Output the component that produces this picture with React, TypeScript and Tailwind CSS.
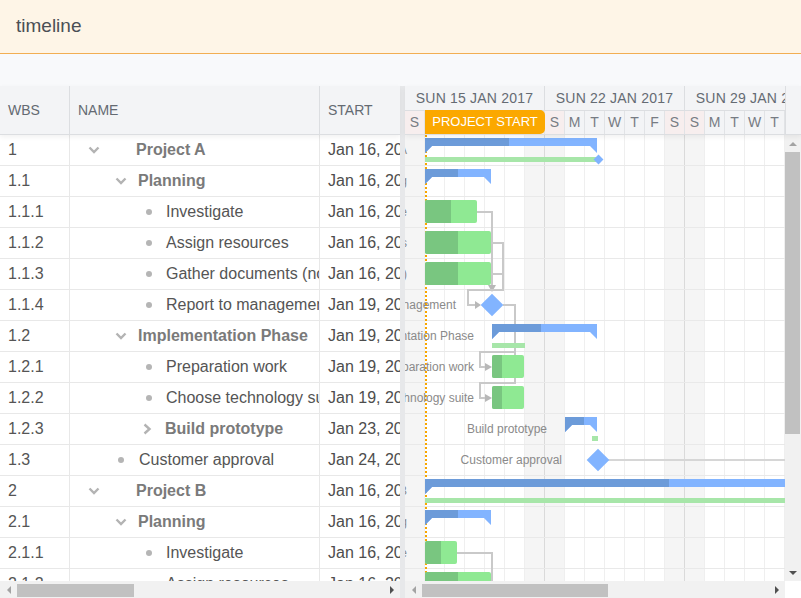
import React from "react";

type Kind = "p0" | "p1" | "p2c" | "l1" | "l2";

type Bar =
  | { t: "parent"; x: number; w: number; p: number; base?: [number, number]; mark?: boolean }
  | { t: "task"; x: number; w: number; p: number }
  | { t: "ms"; x: number; tail?: boolean };

interface Row {
  wbs: string;
  name: string;
  start: string;
  kind: Kind;
  bar: Bar;
}

const rows: Row[] = [
  { wbs: "1", name: "Project A", start: "Jan 16, 2017", kind: "p0", bar: { t: "parent", x: 20, w: 172, p: 84, base: [20, 171], mark: true } },
  { wbs: "1.1", name: "Planning", start: "Jan 16, 2017", kind: "p1", bar: { t: "parent", x: 20, w: 66, p: 33 } },
  { wbs: "1.1.1", name: "Investigate", start: "Jan 16, 2017", kind: "l2", bar: { t: "task", x: 20, w: 52, p: 26 } },
  { wbs: "1.1.2", name: "Assign resources", start: "Jan 16, 2017", kind: "l2", bar: { t: "task", x: 20, w: 66, p: 33 } },
  { wbs: "1.1.3", name: "Gather documents (not resourced)", start: "Jan 16, 2017", kind: "l2", bar: { t: "task", x: 20, w: 66, p: 33 } },
  { wbs: "1.1.4", name: "Report to management", start: "Jan 19, 2017", kind: "l2", bar: { t: "ms", x: 87 } },
  { wbs: "1.2", name: "Implementation Phase", start: "Jan 19, 2017", kind: "p1", bar: { t: "parent", x: 87, w: 105, p: 49, base: [87, 33] } },
  { wbs: "1.2.1", name: "Preparation work", start: "Jan 19, 2017", kind: "l2", bar: { t: "task", x: 87, w: 32, p: 10 } },
  { wbs: "1.2.2", name: "Choose technology suite", start: "Jan 19, 2017", kind: "l2", bar: { t: "task", x: 87, w: 32, p: 10 } },
  { wbs: "1.2.3", name: "Build prototype", start: "Jan 23, 2017", kind: "p2c", bar: { t: "parent", x: 160, w: 32, p: 19, base: [187, 6] } },
  { wbs: "1.3", name: "Customer approval", start: "Jan 24, 2017", kind: "l1", bar: { t: "ms", x: 193, tail: true } },
  { wbs: "2", name: "Project B", start: "Jan 16, 2017", kind: "p0", bar: { t: "parent", x: 20, w: 400, p: 244, base: [20, 400] } },
  { wbs: "2.1", name: "Planning", start: "Jan 16, 2017", kind: "p1", bar: { t: "parent", x: 20, w: 66, p: 33 } },
  { wbs: "2.1.1", name: "Investigate", start: "Jan 16, 2017", kind: "l2", bar: { t: "task", x: 20, w: 32, p: 16 } },
  { wbs: "2.1.2", name: "Assign resources", start: "Jan 16, 2017", kind: "l2", bar: { t: "task", x: 20, w: 66, p: 33 } },
];

// tree indent per row kind (icon offset inside NAME cell, gap before text)
const indent: Record<Kind, { pad: string; gap: string }> = {
  p0: { pad: "pl-[18px]", gap: "ml-[36px]" },
  p1: { pad: "pl-[45px]", gap: "ml-[11px]" },
  p2c: { pad: "pl-[73px]", gap: "ml-[13px]" },
  l1: { pad: "pl-[48px]", gap: "ml-[15px]" },
  l2: { pad: "pl-[76px]", gap: "ml-[14px]" },
};

const days = Array.from({ length: 19 }, (_, k) => k);
const dayLetters = ["S", "M", "T", "W", "T", "F", "S"];
const isWeekend = (k: number) => k % 7 === 0 || k % 7 === 6;

const Tri = ({ dir, dark }: { dir: "l" | "r" | "u" | "d"; dark?: boolean }) => {
  const pts = { l: "5,0 5,8 1,4", r: "1,0 1,8 5,4", u: "0,5 8,5 4,1", d: "0,1 8,1 4,5" }[dir];
  const horiz = dir === "l" || dir === "r";
  return (
    <svg width={horiz ? 6 : 8} height={horiz ? 8 : 6} viewBox={horiz ? "0 0 6 8" : "0 0 8 6"}>
      <polygon points={pts} fill={dark ? "#505050" : "#a3a3a3"} />
    </svg>
  );
};

function TreeIcon({ kind }: { kind: Kind }) {
  if (kind === "p0" || kind === "p1")
    return (
      <svg width="12" height="8" viewBox="0 0 12 8" className="shrink-0">
        <path d="M1.5 1.5 L6 6 L10.5 1.5" fill="none" stroke="#b3b3b3" strokeWidth="2.4" />
      </svg>
    );
  if (kind === "p2c")
    return (
      <svg width="9" height="12" viewBox="0 0 9 12" className="shrink-0">
        <path d="M1.5 1.5 L6.5 6 L1.5 10.5" fill="none" stroke="#b3b3b3" strokeWidth="2.4" />
      </svg>
    );
  return <div className="h-[6px] w-[6px] shrink-0 rounded-full bg-[#b5b5b5]" />;
}

function LeftGrid() {
  return (
    <div className="flex w-[400px] shrink-0 flex-col">
      <div className="relative z-10 flex h-[49px] shrink-0 border-b border-[#dcdee1] bg-[#f3f4f6] text-[14px] text-[#646a72] shadow-[0_2px_5px_rgba(0,0,0,0.06)]">
        <div className="flex w-[70px] items-center border-r border-[#dcdee1] pl-[8px]">WBS</div>
        <div className="flex w-[250px] items-center border-r border-[#dcdee1] pl-[8px]">NAME</div>
        <div className="flex flex-1 items-center pl-[8px]">START</div>
      </div>
      <div className="min-h-0 flex-1 overflow-hidden">
        {rows.map((r, i) => {
          const parent = r.kind.startsWith("p");
          return (
            <div key={i} className="flex h-[31px] shrink-0 border-b border-[#e8e8e8] text-[16px]">
              <div className="flex w-[70px] items-center border-r border-[#e8e8e8] pl-[8px] text-[#555]">{r.wbs}</div>
              <div className={`flex w-[250px] items-center overflow-hidden whitespace-nowrap border-r border-[#e8e8e8] ${indent[r.kind].pad}`}>
                <TreeIcon kind={r.kind} />
                <span className={`${indent[r.kind].gap} ${parent ? "font-bold text-[#7a7a7a]" : "text-[#555]"}`}>{r.name}</span>
              </div>
              <div className="flex flex-1 items-center overflow-hidden whitespace-nowrap pl-[8px] text-[#4d4d4d]">{r.start}</div>
            </div>
          );
        })}
      </div>
      <div className="flex h-[17px] shrink-0 bg-[#f1f1f1]">
        <div className="flex w-[17px] items-center justify-center">
          <Tri dir="l" />
        </div>
        <div className="mt-[3px] mb-px h-[13px] w-[117px] bg-[#c1c1c1]" />
        <div className="flex-1" />
        <div className="flex w-[17px] items-center justify-center">
          <Tri dir="r" dark />
        </div>
      </div>
    </div>
  );
}

function ParentBar({ x, w, p }: { x: number; w: number; p: number }) {
  const h = 8;
  const t = 7;
  const full = `0,0 ${w},0 ${w},${h + t} ${w - t},${h} ${t},${h} 0,${h + t}`;
  const dark = `0,0 ${p},0 ${p},${h} ${t},${h} 0,${h + t}`;
  return (
    <svg className="absolute top-[3px]" style={{ left: x }} width={w} height={h + t}>
      <polygon points={full} fill="#82b4ff" />
      <polygon points={dark} fill="#6c9bd9" />
    </svg>
  );
}

function GanttRow({ r }: { r: Row }) {
  const b = r.bar;
  const labelRight = b.t === "ms" ? b.x - 36 : b.x - 18;
  return (
    <div className="relative h-[31px] shrink-0">
      <div
        className="absolute top-0 flex h-[30px] items-center whitespace-nowrap text-[12px] text-[#8a8a8a]"
        style={{ right: 380 - labelRight }}
      >
        {r.name}
      </div>
      {b.t === "parent" && (
        <>
          <ParentBar x={b.x} w={b.w} p={b.p} />
          {b.base && (
            <div className="absolute top-[22px] h-[5px] bg-[#a7e6a9]" style={{ left: b.base[0], width: b.base[1] }} />
          )}
          {b.mark && (
            <div className="absolute top-[21px] h-[7px] w-[7px] rotate-45 bg-[#80b3ff]" style={{ left: b.x + b.w - 2 }} />
          )}
        </>
      )}
      {b.t === "task" && (
        <div className="absolute top-[3px] flex h-[23px] overflow-hidden rounded-[2px] bg-[#8fe993]" style={{ left: b.x, width: b.w }}>
          <div className="h-full bg-[#79c680]" style={{ width: b.p }} />
        </div>
      )}
      {b.t === "ms" && (
        <>
          {b.tail && <div className="absolute top-[14px] h-[2px] bg-[#d6d6d6]" style={{ left: b.x, right: 0 }} />}
          <div className="absolute top-[7px] h-[16px] w-[16px] rotate-45 bg-[#82b4ff]" style={{ left: b.x - 8 }} />
        </>
      )}
    </div>
  );
}

function Dependencies() {
  const line = { fill: "none", stroke: "#c9c9c9", strokeWidth: 2 };
  return (
    <svg className="pointer-events-none absolute left-0 top-0" width="380" height="446">
      <path d="M72 77 H87 V151" {...line} />
      <polygon points="83,150 91,150 87,157" fill="#b8b8b8" />
      <path d="M86 108 H98 V155 H63 V170 H70" {...line} />
      <polygon points="70,166 70,174 76,170" fill="#b8b8b8" />
      <path d="M86 139 H98" {...line} />
      <path d="M98 170 H110 V217 H75 V232 H81" {...line} />
      <polygon points="80,228 80,236 87,232" fill="#b8b8b8" />
      <path d="M110 217 V248 H75 V263 H81" {...line} />
      <polygon points="80,259 80,267 87,263" fill="#b8b8b8" />
      <path d="M52 418 H87 V446" {...line} />
    </svg>
  );
}

function Schedule() {
  return (
    <div className="flex min-w-0 flex-1 flex-col">
      <div className="relative z-10 flex h-[49px] shrink-0 bg-[#f3f4f6] shadow-[0_2px_5px_rgba(0,0,0,0.06)]">
        <div className="w-[380px] shrink-0 overflow-hidden">
          <div className="flex h-[25px] border-b border-[#dcdee1]">
            {["SUN 15 JAN 2017", "SUN 22 JAN 2017", "SUN 29 JAN 2017"].map((w) => (
              <div key={w} className="flex w-[140px] shrink-0 items-center justify-center whitespace-nowrap border-r border-[#dcdee1] text-[14px] tracking-[0.2px] text-[#656b73]">
                {w}
              </div>
            ))}
          </div>
          <div className="relative flex h-[24px] border-b border-[#dcdee1]">
            {days.map((k) => (
              <div
                key={k}
                className={`flex w-[20px] shrink-0 items-center justify-center border-r border-[#e1e3e6] text-[14px] text-[#777c84] ${isWeekend(k) ? "bg-[#f7eeee]" : ""}`}
              >
                {dayLetters[k % 7]}
              </div>
            ))}
            <div className="absolute left-[20px] top-[-1px] flex h-[24px] w-[120px] items-center justify-center rounded-r-[5px] bg-[#fba800] text-[13px] text-white">
              PROJECT START
            </div>
          </div>
        </div>
        <div className="flex-1 border-l border-[#dcdee1] border-b" />
      </div>
      <div className="flex min-h-0 flex-1">
        <div className="relative w-[380px] shrink-0 overflow-hidden">
          <div className="absolute inset-0 flex">
            {days.map((k) => (
              <div
                key={k}
                className={`h-full w-[20px] shrink-0 border-r ${k % 7 === 6 ? "border-[#dadada]" : "border-[#efefef]"} ${isWeekend(k) ? "bg-[#f5f5f5]" : "bg-white"}`}
              />
            ))}
          </div>
          <div className="absolute inset-0 flex flex-col">
            {rows.map((_, i) => (
              <div key={i} className="h-[31px] shrink-0 border-b border-[#e9e9e9]" />
            ))}
          </div>
          <div className="absolute left-[20px] top-0 h-full border-l-2 border-dotted border-[#f7a600]" />
          <Dependencies />
          <div className="relative flex flex-col">
            {rows.map((r, i) => (
              <GanttRow key={i} r={r} />
            ))}
          </div>
        </div>
        <div className="flex w-[16px] shrink-0 flex-col bg-[#f1f1f1]">
          <div className="flex h-[17px] items-center justify-center">
            <Tri dir="u" />
          </div>
          <div className="mr-px h-[282px] bg-[#c1c1c1]" />
          <div className="flex-1" />
          <div className="flex h-[17px] items-center justify-center">
            <Tri dir="d" dark />
          </div>
        </div>
      </div>
      <div className="flex h-[17px] shrink-0">
        <div className="flex w-[380px] bg-[#f1f1f1]">
          <div className="flex w-[17px] items-center justify-center">
            <Tri dir="l" />
          </div>
          <div className="mt-[3px] mb-px h-[13px] w-[186px] bg-[#c1c1c1]" />
          <div className="flex-1" />
          <div className="flex w-[17px] items-center justify-center">
            <Tri dir="r" dark />
          </div>
        </div>
        <div className="flex-1 bg-white" />
      </div>
    </div>
  );
}

export default function App() {
  return (
    <div className="flex h-[598px] w-[801px] flex-col overflow-hidden bg-white font-['Liberation_Sans',Arial,sans-serif]">
      <div className="flex h-[54px] shrink-0 items-center border-b border-[#f2ae52] bg-[#fef5e7] pl-[16px] text-[19px] text-[#4a4f55]">
        timeline
      </div>
      <div className="h-[32px] shrink-0 bg-[#f8f9fb]" />
      <div className="flex min-h-0 flex-1">
        <LeftGrid />
        <div className="w-[5px] shrink-0 bg-[#e7e8ea]" />
        <Schedule />
      </div>
    </div>
  );
}
